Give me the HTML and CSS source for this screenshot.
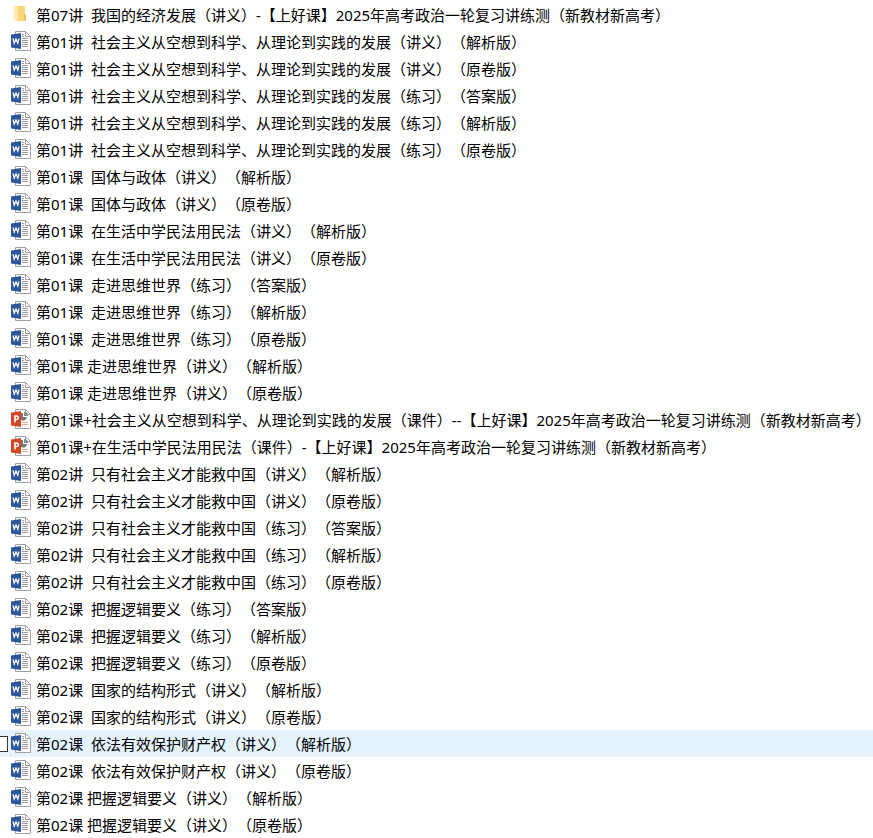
FILE: index.html
```html
<!DOCTYPE html>
<html lang="zh-CN">
<head>
    <meta charset="UTF-8">
    <meta name="viewport" content="width=device-width, initial-scale=1.0">
    <title>文件列表</title>
    <link rel="stylesheet" href="styles.css">
</head>
<body>

    <!-- Icon Shapes -->
    <svg class="icon-defs" aria-hidden="true">
        <symbol id="icon-folder" viewBox="0 0 20 20">
            <path d="M4 2h10v8l1 1v6H7z" fill="#f8d67c"/>
            <path d="M13 10h1l1 1v6h-2z" fill="#e9bf5c"/>
            <path d="M3 2h2l2 2v14l-4-2z" fill="#ffe9a9"/>
        </symbol>
        <symbol id="icon-word" viewBox="0 0 20 20">
            <path d="M4.5.5h10l5 5v14h-15z" fill="#fff" stroke="#a0a0a0"/>
            <path d="M14.5.5v5h5" fill="none" stroke="#a0a0a0"/>
            <path d="M11 3.5h2M11 5.5h2M11 7.5h6M11 9.5h6M11 11.5h6M11 13.5h6M11 15.5h6" stroke="#999"/>
            <path d="M0 3.500l10-1.500v16L0 16.500z" fill="#2b579a"/>
            <path d="M2 7.500l1.200 4.500 1.800-4 1.800 4 1.200-4.500" fill="none" stroke="#fff" stroke-width="1.300"/>
        </symbol>
        <symbol id="icon-ppt" viewBox="0 0 20 20">
            <path d="M4.5.5h10l5 5v14h-15z" fill="#fff" stroke="#a0a0a0"/>
            <path d="M14.5.5v5h5" fill="none" stroke="#a0a0a0"/>
            <path d="M10 4h2v4h4a4 4 0 0 1-6 3z" fill="#777"/>
            <path d="M13 3a4 4 0 0 1 4 4h-4z" fill="#888"/>
            <path d="M11 13.5h6M11 15.5h6" stroke="#ecaa88"/>
            <path d="M0 3.500l10-1.500v16L0 16.500z" fill="#d24726"/>
            <path d="M4 13.500V7h1.500a1.700 1.700 0 0 1 0 3.600H4" fill="none" stroke="#fff" stroke-width="1.500"/>
        </symbol>
    </svg>

    <!-- File List -->
    <ul class="file-list">
        <li class="file"><svg class="icon"><use href="#icon-folder"/></svg><span class="name">第07讲  我国的经济发展（讲义）-【上好课】2025年高考政治一轮复习讲练测（新教材新高考）</span></li>
        <li class="file"><svg class="icon"><use href="#icon-word"/></svg><span class="name">第01讲  社会主义从空想到科学、从理论到实践的发展（讲义）（解析版）</span></li>
        <li class="file"><svg class="icon"><use href="#icon-word"/></svg><span class="name">第01讲  社会主义从空想到科学、从理论到实践的发展（讲义）（原卷版）</span></li>
        <li class="file"><svg class="icon"><use href="#icon-word"/></svg><span class="name">第01讲  社会主义从空想到科学、从理论到实践的发展（练习）（答案版）</span></li>
        <li class="file"><svg class="icon"><use href="#icon-word"/></svg><span class="name">第01讲  社会主义从空想到科学、从理论到实践的发展（练习）（解析版）</span></li>
        <li class="file"><svg class="icon"><use href="#icon-word"/></svg><span class="name">第01讲  社会主义从空想到科学、从理论到实践的发展（练习）（原卷版）</span></li>
        <li class="file"><svg class="icon"><use href="#icon-word"/></svg><span class="name">第01课  国体与政体（讲义）（解析版）</span></li>
        <li class="file"><svg class="icon"><use href="#icon-word"/></svg><span class="name">第01课  国体与政体（讲义）（原卷版）</span></li>
        <li class="file"><svg class="icon"><use href="#icon-word"/></svg><span class="name">第01课  在生活中学民法用民法（讲义）（解析版）</span></li>
        <li class="file"><svg class="icon"><use href="#icon-word"/></svg><span class="name">第01课  在生活中学民法用民法（讲义）（原卷版）</span></li>
        <li class="file"><svg class="icon"><use href="#icon-word"/></svg><span class="name">第01课  走进思维世界（练习）（答案版）</span></li>
        <li class="file"><svg class="icon"><use href="#icon-word"/></svg><span class="name">第01课  走进思维世界（练习）（解析版）</span></li>
        <li class="file"><svg class="icon"><use href="#icon-word"/></svg><span class="name">第01课  走进思维世界（练习）（原卷版）</span></li>
        <li class="file"><svg class="icon"><use href="#icon-word"/></svg><span class="name">第01课 走进思维世界（讲义）（解析版）</span></li>
        <li class="file"><svg class="icon"><use href="#icon-word"/></svg><span class="name">第01课 走进思维世界（讲义）（原卷版）</span></li>
        <li class="file"><svg class="icon"><use href="#icon-ppt"/></svg><span class="name">第01课+社会主义从空想到科学、从理论到实践的发展（课件）--【上好课】2025年高考政治一轮复习讲练测（新教材新高考）</span></li>
        <li class="file"><svg class="icon"><use href="#icon-ppt"/></svg><span class="name">第01课+在生活中学民法用民法（课件）-【上好课】2025年高考政治一轮复习讲练测（新教材新高考）</span></li>
        <li class="file"><svg class="icon"><use href="#icon-word"/></svg><span class="name">第02讲  只有社会主义才能救中国（讲义）（解析版）</span></li>
        <li class="file"><svg class="icon"><use href="#icon-word"/></svg><span class="name">第02讲  只有社会主义才能救中国（讲义）（原卷版）</span></li>
        <li class="file"><svg class="icon"><use href="#icon-word"/></svg><span class="name">第02讲  只有社会主义才能救中国（练习）（答案版）</span></li>
        <li class="file"><svg class="icon"><use href="#icon-word"/></svg><span class="name">第02讲  只有社会主义才能救中国（练习）（解析版）</span></li>
        <li class="file"><svg class="icon"><use href="#icon-word"/></svg><span class="name">第02讲  只有社会主义才能救中国（练习）（原卷版）</span></li>
        <li class="file"><svg class="icon"><use href="#icon-word"/></svg><span class="name">第02课  把握逻辑要义（练习）（答案版）</span></li>
        <li class="file"><svg class="icon"><use href="#icon-word"/></svg><span class="name">第02课  把握逻辑要义（练习）（解析版）</span></li>
        <li class="file"><svg class="icon"><use href="#icon-word"/></svg><span class="name">第02课  把握逻辑要义（练习）（原卷版）</span></li>
        <li class="file"><svg class="icon"><use href="#icon-word"/></svg><span class="name">第02课  国家的结构形式（讲义）（解析版）</span></li>
        <li class="file"><svg class="icon"><use href="#icon-word"/></svg><span class="name">第02课  国家的结构形式（讲义）（原卷版）</span></li>
        <li class="file hovered"><input type="checkbox" class="check" id="file-28"><svg class="icon"><use href="#icon-word"/></svg><label class="name" for="file-28">第02课  依法有效保护财产权（讲义）（解析版）</label></li>
        <li class="file"><svg class="icon"><use href="#icon-word"/></svg><span class="name">第02课  依法有效保护财产权（讲义）（原卷版）</span></li>
        <li class="file"><svg class="icon"><use href="#icon-word"/></svg><span class="name">第02课 把握逻辑要义（讲义）（解析版）</span></li>
        <li class="file"><svg class="icon"><use href="#icon-word"/></svg><span class="name">第02课 把握逻辑要义（讲义）（原卷版）</span></li>
    </ul>

</body>
</html>
```
FILE: styles.css
```css
/* Reset & Global Styles */
* {
    margin: 0;
    padding: 0;
    box-sizing: border-box;
}

body {
    background: #fff;
    color: #000;
    font-family: "Noto Sans", "Noto Sans CJK SC", sans-serif;
    font-size: 15px;
    overflow-x: hidden;
}

.icon-defs {
    display: none;
}

/* File List */
.file-list {
    list-style: none;
    padding-top: 1px;
}

.file {
    position: relative;
    display: flex;
    align-items: center;
    gap: 5px;
    height: 27px;
    padding-left: 11px;
}

.file.hovered {
    background: #e5f3ff;
}

.icon {
    flex: none;
    width: 20px;
    height: 20px;
    margin-bottom: 1px;
}

/* Keep both spaces after the number and full-width brackets */
.name {
    padding-top: 2px;
    white-space: pre;
    line-height: 27px;
    text-spacing-trim: space-all;
}

/* Checkbox hangs over the left edge of the row */
.check {
    appearance: none;
    position: absolute;
    left: -8px;
    top: 6px;
    width: 16px;
    height: 16px;
    background: #fff;
    border: 1px solid #333;
}
```
